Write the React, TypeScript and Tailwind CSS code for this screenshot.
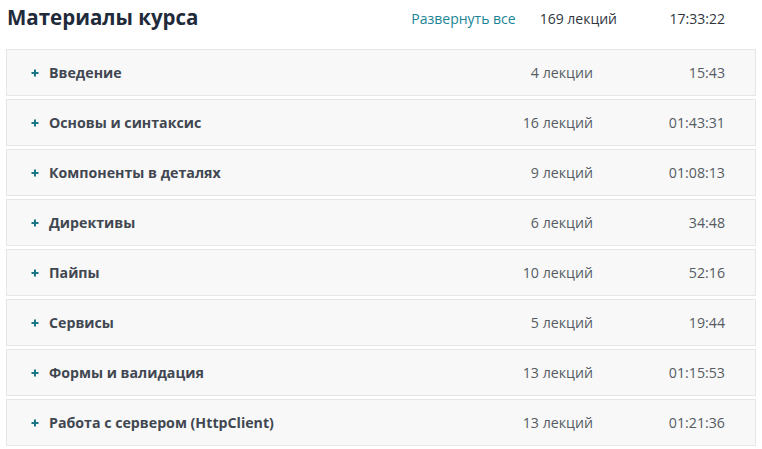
import React from "react";

const rows = [
  { title: "Введение", count: "4 лекции", time: "15:43" },
  { title: "Основы и синтаксис", count: "16 лекций", time: "01:43:31" },
  { title: "Компоненты в деталях", count: "9 лекций", time: "01:08:13" },
  { title: "Директивы", count: "6 лекций", time: "34:48" },
  { title: "Пайпы", count: "10 лекций", time: "52:16" },
  { title: "Сервисы", count: "5 лекций", time: "19:44" },
  { title: "Формы и валидация", count: "13 лекций", time: "01:15:53" },
  { title: "Работа с сервером (HttpClient)", count: "13 лекций", time: "01:21:36" },
];

export default function App() {
  return (
    <div
      className="w-[762px] h-[449px] bg-white px-[6px] overflow-hidden"
      style={{ fontFamily: '"Open Sans", "Noto Sans", sans-serif' }}
    >
      <div className="flex items-center h-[35px] pl-[1px] pr-[31px]">
        <h2 className="text-[20.5px] font-bold text-[#1f2b3a] leading-none">Материалы курса</h2>
        <div className="ml-auto flex items-center text-[14px] pt-[1px]">
          <span className="text-[#1b8597]">Развернуть все</span>
          <span className="ml-[24px] text-[#2f3640]">169 лекций</span>
          <span className="w-[108px] text-right text-[#2f3640]">17:33:22</span>
        </div>
      </div>
      <div className="mt-[14px] flex flex-col gap-[3px]">
        {rows.map((r) => (
          <div
            key={r.title}
            className="flex items-center h-[47px] bg-[#f8f8f8] border border-[#e6e6e6] pl-[24px] pr-[30px] text-[14.2px]"
          >
            <span className="w-[18px] flex items-center">
              <svg width="8" height="8" viewBox="0 0 8 8" className="mt-[1px]">
                <path d="M4 0.5V7.5M0.5 4H7.5" stroke="#1b7688" strokeWidth="2" />
              </svg>
            </span>
            <span className="font-bold text-[#414751]">{r.title}</span>
            <span className="ml-auto text-[#555b63]">{r.count}</span>
            <span className="w-[132px] text-right text-[#555b63]">{r.time}</span>
          </div>
        ))}
      </div>
    </div>
  );
}
